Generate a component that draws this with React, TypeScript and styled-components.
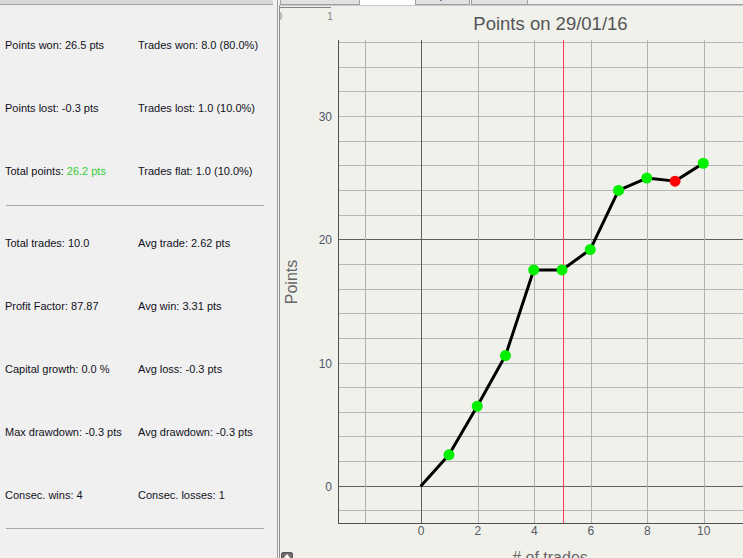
import React from 'react';
import styled, { createGlobalStyle } from 'styled-components';

const GlobalStyle = createGlobalStyle`
  html, body {
    margin: 0;
    padding: 0;
    overflow: hidden;
    background: #f0f0f0;
  }
`;

const palette = {
  panel: '#f0f0f0',
  chart: '#f1f1ec',
  border: '#a0a0a0',
  text: '#111122',
  positive: '#33cc33',
};

const Window = styled.div`
  display: flex;
  width: 743px;
  height: 558px;
  overflow: hidden;
  background: ${palette.panel};
  font-family: "Liberation Sans", Arial, sans-serif;
`;

// ---- left summary panel ----
const SummaryPanel = styled.aside`
  flex: none;
  width: 277px;
  margin-right: 1px;
  border-right: 1px solid ${palette.border};
  display: flex;
  flex-direction: column;
`;

const PanelHeader = styled.div`
  width: 273px;
  height: 4px;
  background: #d9d9d9;
  border-bottom: 1px solid ${palette.border};
`;

const StatGrid = styled.div<{ $top: number }>`
  display: grid;
  grid-template-columns: 133px 1fr;
  grid-auto-rows: 63px;
  align-items: center;
  padding: ${(p) => p.$top}px 0 0 5px;
`;

const Stat = styled.div`
  font-size: 11px;
  color: ${palette.text};
  white-space: nowrap;
`;

const Value = styled.span<{ $good?: boolean }>`
  color: ${(p) => (p.$good ? palette.positive : 'inherit')};
`;

const Divider = styled.hr<{ $top: number; $bottom: number }>`
  border: none;
  border-top: 1px solid #a8a8a8;
  height: 0;
  margin: ${(p) => p.$top}px 13px ${(p) => p.$bottom}px 6px;
`;

// ---- right chart panel ----
const ChartPanel = styled.section`
  flex: 1;
  display: flex;
  flex-direction: column;
  min-width: 0;
`;

const TabBar = styled.div`
  display: flex;
  align-items: flex-end;
  height: 5px;
  overflow: hidden;
  padding-left: 1px;
`;

const Tab = styled.div<{ $w: number; $active?: boolean; $gap?: number }>`
  flex: none;
  box-sizing: border-box;
  width: ${(p) => p.$w}px;
  height: 20px;
  margin-right: ${(p) => p.$gap ?? 0}px;
  padding-bottom: 2px;
  display: flex;
  align-items: flex-end;
  justify-content: center;
  font-size: 11px;
  line-height: 13px;
  color: #222;
  background: ${(p) => (p.$active ? '#ffffff' : '#e1e1e1')};
  border: ${(p) => (p.$active ? 'none' : `1px solid ${palette.border}`)};
`;

const TabRest = styled.div`
  flex: 1;
  align-self: stretch;
  border-bottom: 1px solid ${palette.border};
`;

const ChartFrame = styled.div`
  position: relative;
  flex: 1;
  background: ${palette.chart};
  border-left: 1px solid #8f8f8f;
  border-top: 1px solid #c8c8c8;
  overflow: hidden;
`;

const ChartSvg = styled.svg`
  display: block;
  font-family: "Liberation Sans", Arial, sans-serif;
`;

const CornerButton = styled.div`
  position: absolute;
  left: 1px;
  top: 546px;
  width: 12px;
  height: 12px;
  box-sizing: border-box;
  border: 1px solid #555;
  border-radius: 2px;
  background: #6e6e6e;
  display: flex;
  justify-content: center;
  padding-top: 1px;
`;

const X0 = 421.7;
const XS = 28.26;
const Y0 = 486.3;
const YS = 12.33;
const px = (x: number) => X0 + x * XS;
const py = (y: number) => Y0 - y * YS;
const crisp = (v: number) => Math.floor(v) + 0.5;

const PLOT = { left: 338, top: 40, right: 743, bottom: 523 };

const points = [0, 2.55, 6.5, 10.6, 17.55, 17.55, 19.2, 24.0, 25.0, 24.75, 26.2];

const Chart: React.FC = () => {
  const vLines = [-2, 0, 2, 4, 6, 8, 10];
  const hLines: number[] = [];
  for (let v = -2; v <= 36; v += 2) hLines.push(v);
  const markerX = crisp(px(5));

  return (
    <ChartSvg width={463} height={552} viewBox="280 6 463 552">
      {/* top ruler */}
      <line x1={280} y1={7.5} x2={331} y2={7.5} stroke="#808080" />
      <text x={279} y={20} fontSize={11} fill="#8a8a8a" textAnchor="middle">0</text>
      <text x={330} y={20} fontSize={11} fill="#8a8a8a" textAnchor="middle">1</text>

      <text x={550.5} y={30} fontSize={18.5} fill="#555555" textAnchor="middle">
        Points on 29/01/16
      </text>

      {hLines.map((v) => (
        <line
          key={`h${v}`}
          x1={PLOT.left}
          x2={PLOT.right}
          y1={crisp(py(v))}
          y2={crisp(py(v))}
          stroke={v === 0 || v === 20 ? '#5f5f5f' : '#b6b6b6'}
        />
      ))}
      {vLines.map((v) => (
        <line
          key={`v${v}`}
          x1={crisp(px(v))}
          x2={crisp(px(v))}
          y1={PLOT.top}
          y2={PLOT.bottom}
          stroke={v === 0 ? '#5f5f5f' : '#b0b0b0'}
        />
      ))}
      {/* current-day marker */}
      <rect x={markerX - 0.5} y={PLOT.top} width={1} height={PLOT.bottom - PLOT.top} fill="#ff3a5c" />

      {/* plot frame */}
      <line x1={338.5} y1={PLOT.top} x2={338.5} y2={524} stroke="#505050" />
      <line x1={338} y1={523.5} x2={PLOT.right} y2={523.5} stroke="#505050" />

      {[0, 10, 20, 30].map((v) => (
        <text key={`yl${v}`} x={332} y={py(v) + 4.5} fontSize={12} fill="#50566a" textAnchor="end">
          {v}
        </text>
      ))}
      {[0, 2, 4, 6, 8, 10].map((v) => (
        <text key={`xl${v}`} x={px(v) - 0.5} y={535} fontSize={12} fill="#555a66" textAnchor="middle">
          {v}
        </text>
      ))}

      <text
        x={297}
        y={282}
        fontSize={16}
        fill="#666666"
        textAnchor="middle"
        transform="rotate(-90 297 282)"
      >
        Points
      </text>
      <text x={550} y={563} fontSize={16} fill="#666666" textAnchor="middle">
        # of trades
      </text>

      <polyline
        points={points.map((v, i) => `${px(i) - 1},${py(v)}`).join(' ')}
        fill="none"
        stroke="#000"
        strokeWidth={3}
        strokeLinejoin="round"
      />
      {points.slice(1).map((v, i) => (
        <circle
          key={`p${i}`}
          cx={px(i + 1) - 1}
          cy={py(v)}
          r={5.5}
          fill={i + 1 === 9 ? '#ff0000' : '#00f000'}
        />
      ))}
    </ChartSvg>
  );
};

const App: React.FC = () => (
  <Window>
    <GlobalStyle />
    <SummaryPanel>
      <PanelHeader />
      <StatGrid $top={8}>
        <Stat>Points won: 26.5 pts</Stat>
        <Stat>Trades won: 8.0 (80.0%)</Stat>
        <Stat>Points lost: -0.3 pts</Stat>
        <Stat>Trades lost: 1.0 (10.0%)</Stat>
        <Stat>
          Total points: <Value $good>26.2 pts</Value>
        </Stat>
        <Stat>Trades flat: 1.0 (10.0%)</Stat>
      </StatGrid>
      <Divider $top={3} $bottom={5} />
      <StatGrid $top={0}>
        <Stat>Total trades: 10.0</Stat>
        <Stat>Avg trade: 2.62 pts</Stat>
        <Stat>Profit Factor: 87.87</Stat>
        <Stat>Avg win: 3.31 pts</Stat>
        <Stat>Capital growth: 0.0 %</Stat>
        <Stat>Avg loss: -0.3 pts</Stat>
        <Stat>Max drawdown: -0.3 pts</Stat>
        <Stat>Avg drawdown: -0.3 pts</Stat>
        <Stat>Consec. wins: 4</Stat>
        <Stat>Consec. losses: 1</Stat>
      </StatGrid>
      <Divider $top={2} $bottom={0} />
    </SummaryPanel>

    <ChartPanel>
      <TabBar>
        <Tab $w={80}>Transactions</Tab>
        <Tab $w={55} $active />
        <Tab $w={55} $gap={1}>Capital</Tab>
        <Tab $w={57}>Growth</Tab>
        <TabRest />
      </TabBar>
      <ChartFrame>
        <Chart />
        <CornerButton>
          <svg width="8" height="6" viewBox="0 0 8 6">
            <polygon points="4,0 8,5 0,5" fill="#fff" />
          </svg>
        </CornerButton>
      </ChartFrame>
    </ChartPanel>
  </Window>
);

export default App;
